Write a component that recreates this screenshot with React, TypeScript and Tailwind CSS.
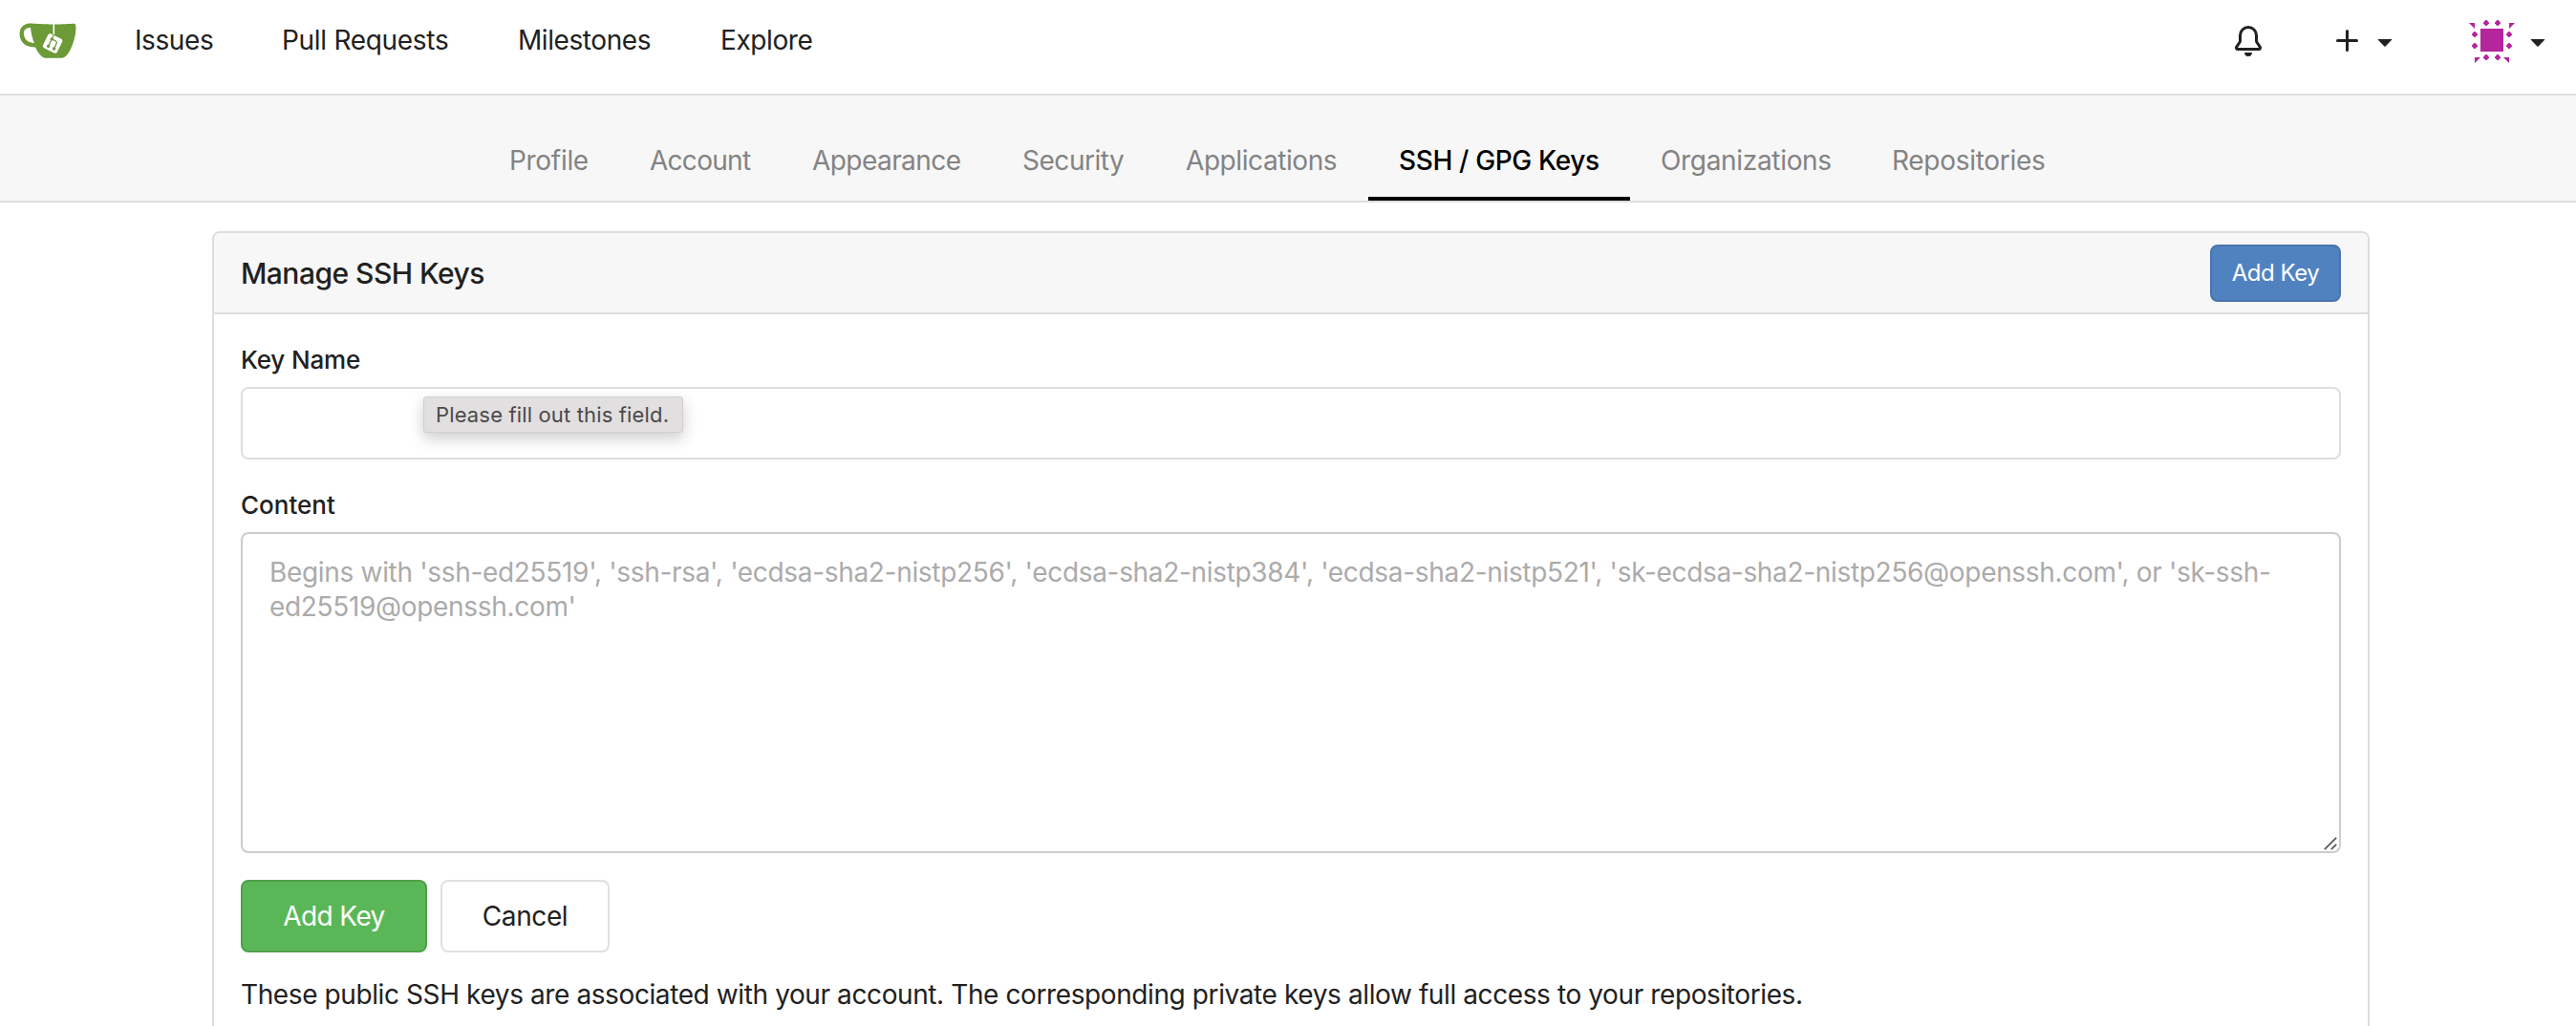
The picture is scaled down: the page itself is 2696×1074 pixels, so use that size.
const navItems = [
  { label: 'Issues', cls: 'w-[154px] tracking-[-0.41px]' },
  { label: 'Pull Requests', cls: 'w-[247px] tracking-[-0.3px]' },
  { label: 'Milestones', cls: 'w-[212px] tracking-[-0.42px]' },
  { label: 'Explore', cls: 'w-[160px] tracking-[-0.4px]' },
]

const tabs = [
  { label: 'Profile', cls: 'w-[147px] tracking-[-0.3px]' },
  { label: 'Account', cls: 'w-[170px] tracking-[-0.72px]' },
  { label: 'Appearance', cls: 'w-[220px] tracking-[-0.56px]' },
  { label: 'Security', cls: 'w-[171px] tracking-[-0.47px]' },
  { label: 'Applications', cls: 'w-[223px] tracking-[-0.42px]' },
  { label: 'SSH / GPG Keys', cls: 'w-[274px] tracking-[-0.36px]', active: true },
  { label: 'Organizations', cls: 'w-[242px] tracking-[-0.32px]' },
  { label: 'Repositories', cls: 'w-[224px] tracking-[-0.29px]' },
]

function Logo() {
  return (
    <svg viewBox="0 0 640 640" className="size-[60px]">
      <path
        fill="#fff"
        d="M395.9,484.2l-126.9-61c-12.5-6-17.9-21.2-11.8-33.8l61-126.9c6-12.5,21.2-17.9,33.8-11.8c17.2,8.3,27.1,13,27.1,13l-0.1-109.2l16.7-0.1l0.1,117.1c0,0,57.4,24.2,83.1,40.1c3.7,2.3,10.2,6.8,12.9,14.4c2.1,6.1,2,13.1-1,19.3l-61,126.9C423.6,484.9,408.4,490.3,395.9,484.2z"
      />
      <path
        fill="#6b9a37"
        d="M622.7,149.8c-4.1-4.1-9.6-4-9.6-4s-117.2,6.6-177.9,8c-13.3,0.3-26.5,0.6-39.6,0.7c0,39.1,0,78.2,0,117.2c-5.5-2.6-11.1-5.3-16.6-7.9c0-36.4-0.1-109.2-0.1-109.2c-29,0.4-89.2-2.2-89.2-2.2s-141.4-7.1-156.8-8.5c-9.8-0.6-22.5-2.1-39,1.5c-8.7,1.8-33.5,7.4-53.8,26.9C-4.9,212.4,6.6,276.2,8,285.8c1.7,11.7,6.9,44.2,31.7,72.5c45.8,56.1,144.4,54.8,144.4,54.8s12.1,28.9,30.6,55.5c25,33.1,50.7,58.9,75.7,62c63,0,188.9-0.1,188.9-0.1s12,0.1,28.3-10.3c14-8.5,26.5-23.4,26.5-23.4s12.9-13.8,30.9-45.3c5.5-9.7,10.1-19.1,14.1-28c0,0,55.2-117.1,55.2-231.1C633.2,157.9,624.7,151.8,622.7,149.8z M125.6,353.9c-25.9-8.5-36.9-18.7-36.9-18.7S69.6,321.8,60,295.4c-16.5-44.2-1.4-71.2-1.4-71.2s8.4-22.5,38.5-30c13.8-3.7,31-3.1,31-3.1s7.1,59.4,15.7,94.2c7.2,29.2,24.8,77.7,24.8,77.7S142.5,359.9,125.6,353.9z M425.9,461.5c0,0-6.1,14.5-19.6,15.4c-5.8,0.4-10.3-1.2-10.3-1.2s-0.3-0.1-5.3-2.1l-112.9-55c0,0-10.9-5.7-12.8-15.6c-2.2-8.1,2.7-18.1,2.7-18.1L322,273c0,0,4.8-9.7,12.2-13c0.6-0.3,2.3-1,4.5-1.5c8.1-2.1,18,2.8,18,2.8l110.7,53.7c0,0,12.6,5.7,15.3,16.2c1.9,7.4-0.5,14-1.8,17.2C474.6,363.8,425.9,461.5,425.9,461.5z"
      />
      <path
        fill="#6b9a37"
        d="M326.8,380.1c-8.2,0.1-15.4,5.8-17.3,13.8c-1.9,8,2,16.3,9.1,20c7.7,4,17.5,1.8,22.7-5.4c5.1-7.1,4.3-16.9-1.8-23.1l24-49.1c1.5,0.1,3.7,0.2,6.2-0.5c4.1-0.9,7.1-3.6,7.1-3.6c4.2,1.8,8.6,3.8,13.2,6.1c4.8,2.4,9.3,4.9,13.4,7.3c0.9,0.5,1.8,1.1,2.8,1.9c1.6,1.3,3.4,3.1,4.7,5.5c1.9,5.5-1.9,14.9-1.9,14.9c-2.3,7.6-18.4,40.6-18.4,40.6c-8.1-0.2-15.3,5-17.7,12.5c-2.6,8.1,1.1,17.3,8.9,21.3c7.8,4,17.4,1.7,22.5-5.3c5-6.8,4.6-16.3-1.1-22.6c1.9-3.7,3.7-7.4,5.6-11.3c5-10.4,13.5-30.4,13.5-30.4c0.9-1.7,5.7-10.3,2.7-21.3c-2.5-11.4-12.6-16.7-12.6-16.7c-12.2-7.9-29.2-15.2-29.2-15.2s0-4.1-1.1-7.1c-1.1-3.1-2.8-5.1-3.9-6.3c4.7-9.7,9.4-19.3,14.1-29c-4.1-2-8.1-4-12.2-6.1c-4.8,9.8-9.7,19.7-14.5,29.5c-6.7-0.1-12.9,3.5-16.1,9.4c-3.4,6.3-2.7,14.1,1.9,19.8C343.2,346.5,335,363.3,326.8,380.1z"
      />
    </svg>
  )
}

function Bell() {
  return (
    <svg viewBox="0 0 16 16" className="size-8" fill="currentColor">
      <path d="M8 16a2 2 0 0 0 1.985-1.75c.017-.137-.097-.25-.235-.25h-3.5c-.138 0-.252.113-.235.25A2 2 0 0 0 8 16ZM3 5a5 5 0 0 1 10 0v2.947c0 .05.015.098.042.139l1.703 2.555A1.519 1.519 0 0 1 13.482 13H2.518a1.516 1.516 0 0 1-1.263-2.36l1.703-2.554A.255.255 0 0 0 3 7.947Zm5-3.5A3.5 3.5 0 0 0 4.5 5v2.947c0 .346-.102.683-.294.97l-1.703 2.556a.017.017 0 0 0-.003.01l.001.006c0 .002.002.004.004.006l.006.004.007.001h10.964l.007-.001.006-.004.004-.006.001-.007a.017.017 0 0 0-.003-.01l-1.703-2.554a1.745 1.745 0 0 1-.294-.97V5A3.5 3.5 0 0 0 8 1.5Z" />
    </svg>
  )
}

function Plus() {
  return (
    <svg viewBox="0 0 16 16" className="size-8" fill="currentColor">
      <path d="M7.75 2a.75.75 0 0 1 .75.75V7h4.25a.75.75 0 0 1 0 1.5H8.5v4.25a.75.75 0 0 1-1.5 0V8.5H2.75a.75.75 0 0 1 0-1.5H7V2.75A.75.75 0 0 1 7.75 2Z" />
    </svg>
  )
}

function Caret() {
  return (
    <svg viewBox="0 0 16 16" className="size-8" fill="currentColor">
      <path d="m4.427 7.427 3.396 3.396a.25.25 0 0 0 .354 0l3.396-3.396A.25.25 0 0 0 11.396 7H4.604a.25.25 0 0 0-.177.427Z" />
    </svg>
  )
}

const dots = [
  [18, 0], [30, 0], [6, 12], [6, 24], [42, 12], [42, 24], [18, 36], [30, 36],
]

function Avatar() {
  return (
    <svg viewBox="0 -4 48 48" className="size-12" fill="#b5259b">
      <rect x="12" y="6" width="24" height="24" />
      {dots.map(([x, y]) => (
        <path key={`${x}-${y}`} transform={`translate(${x} ${y})`} d="M-.6-3h1.2L3-.6v1.2L.6 3h-1.2L-3 .6v-1.2Z" />
      ))}
      <path d="M0 0h6v6ZM42 0h6l-6 6ZM6 36h6l-6 6ZM36 36h6v6Z" />
    </svg>
  )
}

export default function App() {
  return (
    <div className="h-[1074px] w-[2696px] overflow-hidden bg-white text-[28px] leading-9 text-[#212121] font-['Inter','Liberation_Sans',sans-serif]">
      <header className="flex h-[100px] justify-between border-b-2 border-[#dddddd]">
        <nav className="flex h-[84px] items-center pl-5">
          <a className="mr-[61px] -mt-[2px] block">
            <Logo />
          </a>
          {navItems.map((n) => (
            <a key={n.label} className={n.cls}>
              {n.label}
            </a>
          ))}
        </nav>
        <div className="flex h-[86px] items-center pr-6">
          <Bell />
          <div className="ml-[72px] flex items-center gap-[7px]">
            <Plus />
            <Caret />
          </div>
          <div className="ml-[72px] flex items-center gap-2">
            <div className="pt-[2px]">
              <Avatar />
            </div>
            <Caret />
          </div>
        </div>
      </header>

      <div className="flex h-[112px] items-end border-b-2 border-[#dddddd] bg-[#f7f7f7] pl-[501px]">
        {tabs.map((t) => (
          <a
            key={t.label}
            className={`flex h-20 items-center whitespace-nowrap border-b-4 pl-8 ${t.cls} ${
              t.active ? 'border-black font-medium text-black' : 'border-transparent text-[#838383]'
            }`}
          >
            {t.label}
          </a>
        ))}
      </div>

      <main className="ml-[222px] mt-[30px] w-[2258px] rounded-t-lg border-2 border-[#dddddd]">
        <div className="flex h-[85px] items-center justify-between rounded-t-md border-b-2 border-[#dddddd] bg-[#f7f7f7] px-7">
          <h4 className="text-[30px] font-medium tracking-[-0.52px]">Manage SSH Keys</h4>
          <button className="h-[60px] w-[137px] rounded-lg border-2 border-[#4a74ae] bg-[#5182c0] pt-px text-2xl tracking-[-0.5px] text-white">
            Add Key
          </button>
        </div>

        <form className="px-7 pt-8">
          <label className="block text-[26px] font-medium leading-8 tracking-[-0.15px]">Key Name</label>
          <div className="relative mt-3">
            <input className="block h-[76px] w-full rounded-lg border-2 border-[#dedede] bg-white px-7" />
            <div className="absolute left-[191px] top-[10px] flex h-[38px] w-[272px] items-center whitespace-nowrap rounded-[3px] border border-[#d2cfd0] bg-[#e2dfe0] pl-3 text-[22px] tracking-[0.15px] text-[#4b4a4a] shadow-[0_6px_16px_rgba(0,0,0,0.2)]">
              Please fill out this field.
            </div>
          </div>

          <label className="mt-8 block text-[26px] font-medium leading-8">Content</label>
          <div className="relative mt-3">
            <textarea
              className="block h-[336px] w-full resize-none overflow-hidden rounded-lg border-2 border-[#cccccc] bg-white px-7 py-[22px] tracking-[-0.32px] placeholder:text-[#ababab]"
              placeholder="Begins with 'ssh-ed25519', 'ssh-rsa', 'ecdsa-sha2-nistp256', 'ecdsa-sha2-nistp384', 'ecdsa-sha2-nistp521', 'sk-ecdsa-sha2-nistp256@openssh.com', or 'sk-ssh-ed25519@openssh.com'"
            />
            <svg viewBox="0 0 14 14" className="absolute bottom-[3px] right-1 size-[14px]" stroke="#5a5a5a" strokeWidth="1.8">
              <path d="M.8 13.2 13.2.8M7.8 13.2l5.4-5.4" />
            </svg>
          </div>

          <div className="mt-7 flex gap-[14px]">
            <button className="h-[76px] w-[195px] rounded-lg border-2 border-[#4fa04a] bg-[#5ab757] tracking-[-0.62px] text-white">
              Add Key
            </button>
            <button className="h-[76px] w-[177px] rounded-lg border-2 border-[#e0e0e0] bg-white tracking-[-0.4px]">
              Cancel
            </button>
          </div>
        </form>

        <p className="mt-[26px] px-7 pb-10 tracking-[-0.397px]">
          These public SSH keys are associated with your account. The corresponding private keys allow full access to your
          repositories.
        </p>
      </main>
    </div>
  )
}
